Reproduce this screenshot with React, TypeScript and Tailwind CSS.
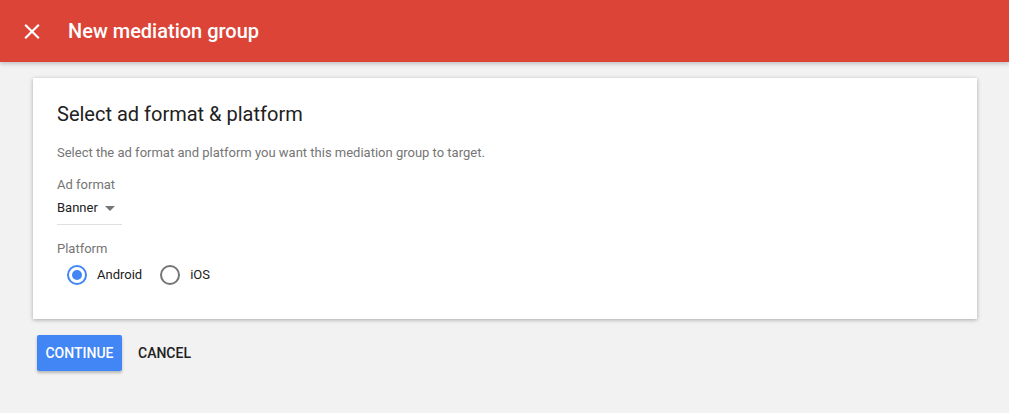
import { useState } from "react";

export default function App() {
  const [platform, setPlatform] = useState("android");

  return (
    <div className="min-h-[413px] w-full bg-[#f2f2f2] font-['Roboto',sans-serif]">
      {/* Header */}
      <div className="flex h-[62px] items-center bg-[#db4437] shadow-[0_2px_4px_rgba(0,0,0,0.2)]">
        <button className="ml-[19px] flex h-[26px] w-[26px] items-center justify-center text-white">
          <svg width="27" height="27" viewBox="0 0 24 24" fill="white">
            <path d="M19 6.41 17.59 5 12 10.59 6.41 5 5 6.41 10.59 12 5 17.59 6.41 19 12 13.41 17.59 19 19 17.59 13.41 12z" />
          </svg>
        </button>
        <h1 className="ml-[23px] text-[20px] font-medium text-white">New mediation group</h1>
      </div>

      {/* Card */}
      <div className="mx-[33px] mt-[16px] w-[944px] bg-white px-6 pb-[34px] pt-[24px] shadow-[0_1px_4px_rgba(0,0,0,0.3)]">
        <h2 className="text-[20px] leading-6 text-[#212121]">Select ad format &amp; platform</h2>
        <p className="mt-[19px] text-[13px] leading-4 text-[#757575]">
          Select the ad format and platform you want this mediation group to target.
        </p>

        <div className="mt-[16px] text-[13px] leading-4 text-[#757575]">Ad format</div>
        <div className="mt-[7px] flex h-[25px] w-[65px] items-start border-b border-[#e0e0e0] text-[13px] leading-4 text-[#212121]">
          <span>Banner</span>
          <svg className="ml-[7px] mt-[6px]" width="10" height="5" viewBox="0 0 10 5">
            <path d="M0 0h10L5 5z" fill="#757575" />
          </svg>
        </div>

        <div className="mt-[16px] text-[13px] leading-4 text-[#757575]">Platform</div>
        <div className="ml-[10px] mt-[8px] flex items-center">
          <Radio label="Android" checked={platform === "android"} onClick={() => setPlatform("android")} />
          <div className="w-[18px]" />
          <Radio label="iOS" checked={platform === "ios"} onClick={() => setPlatform("ios")} />
        </div>
      </div>

      {/* Actions */}
      <div className="ml-[37px] mt-[16px] flex items-center">
        <button className="h-[36px] w-[85px] rounded-[2px] bg-[#4285f4] text-[14px] font-medium text-white shadow-[0_2px_3px_rgba(0,0,0,0.25)]">
          CONTINUE
        </button>
        <button className="ml-[16px] text-[14px] font-medium text-[#212121]">CANCEL</button>
      </div>
    </div>
  );
}

function Radio({ label, checked, onClick }: { label: string; checked: boolean; onClick: () => void }) {
  return (
    <button onClick={onClick} className="flex items-center">
      <span
        className={
          checked
            ? "flex h-[20px] w-[20px] items-center justify-center rounded-full border-2 border-[#4285f4]"
            : "flex h-[20px] w-[20px] items-center justify-center rounded-full border-2 border-[#757575]"
        }
      >
        {checked && <span className="h-[10px] w-[10px] rounded-full bg-[#4285f4]" />}
      </span>
      <span className="ml-[10px] text-[13px] text-[#212121]">{label}</span>
    </button>
  );
}
